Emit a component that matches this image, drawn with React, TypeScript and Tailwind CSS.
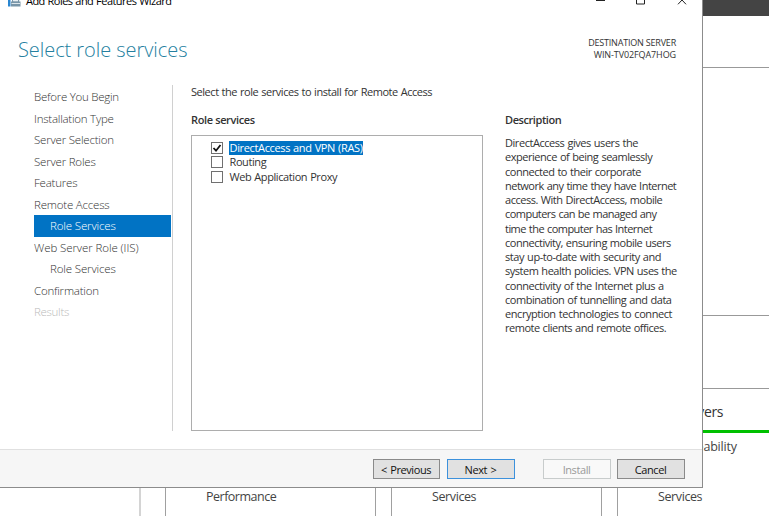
import React from "react";

const steps = [
  { label: "Before You Begin", tone: "text-[#333]", cls: "tracking-[-0.26px]" },
  { label: "Installation Type", tone: "text-[#333]", cls: "tracking-[-0.24px]" },
  { label: "Server Selection", tone: "text-[#333]", cls: "tracking-[-0.2px]" },
  { label: "Server Roles", tone: "text-[#333]", cls: "tracking-[-0.2px]" },
  { label: "Features", tone: "text-[#333]", cls: "tracking-[-0.2px]" },
  { label: "Remote Access", tone: "text-[#333]", cls: "tracking-[-0.2px]" },
  { label: "Role Services", tone: "bg-[#0173c4] text-white", cls: "pl-4 tracking-[-0.14px]" },
  { label: "Web Server Role (IIS)", tone: "text-[#333]", cls: "tracking-[-0.09px]" },
  { label: "Role Services", tone: "text-[#333]", cls: "pl-4 tracking-[-0.14px]" },
  { label: "Confirmation", tone: "text-[#333]", cls: "tracking-[-0.22px]" },
  { label: "Results", tone: "text-[#bbb]", cls: "tracking-[-0.3px]" },
];

const description = [
  { text: "DirectAccess gives users the", cls: "tracking-[-0.45px]" },
  { text: "experience of being seamlessly", cls: "tracking-[-0.46px]" },
  { text: "connected to their corporate", cls: "tracking-[-0.47px]" },
  { text: "network any time they have Internet", cls: "tracking-[-0.51px]" },
  { text: "access. With DirectAccess, mobile", cls: "tracking-[-0.48px]" },
  { text: "computers can be managed any", cls: "tracking-[-0.54px]" },
  { text: "time the computer has Internet", cls: "tracking-[-0.54px]" },
  { text: "connectivity, ensuring mobile users", cls: "tracking-[-0.48px]" },
  { text: "stay up-to-date with security and", cls: "tracking-[-0.43px]" },
  { text: "system health policies. VPN uses the", cls: "tracking-[-0.48px]" },
  { text: "connectivity of the Internet plus a", cls: "tracking-[-0.45px]" },
  { text: "combination of tunnelling and data", cls: "tracking-[-0.47px]" },
  { text: "encryption technologies to connect", cls: "tracking-[-0.43px]" },
  { text: "remote clients and remote offices.", cls: "tracking-[-0.49px]" },
];

const roles = [
  { label: "DirectAccess and VPN (RAS)", checked: true },
  { label: "Routing", checked: false },
  { label: "Web Application Proxy", checked: false },
];

function Tile({ label, cls }: { label: string; cls: string }) {
  return (
    <div className={`h-full w-[211px] shrink-0 border-x border-[#a0a0a0] pl-10 pt-px ${cls}`}>{label}</div>
  );
}

function ServerManager() {
  return (
    <div className="flex h-full w-full flex-col bg-white">
      <div className="h-4 shrink-0 bg-[#444]" />
      <div className="h-[52px] shrink-0 border-b border-[#999]" />
      <div className="h-[248px] shrink-0 border-b border-[#999]" />
      <div className="h-[73px] shrink-0 border-b border-[#999]" />
      <div className="flex h-[41px] shrink-0 items-center pl-[658px] pt-[3px] text-[14px] tracking-[-0.4px] text-[#333]">
        <span className="w-[65px] text-right whitespace-nowrap">All Servers</span>
      </div>
      <div className="ml-[617px] h-[3px] shrink-0 bg-[#00c000]" />
      <div className="flex h-[55px] shrink-0 pl-[658px] pt-[6px] text-[12.5px] leading-[16px] text-[#444]">
        <span className="w-[78px] text-right tracking-[-0.2px]">Manageability</span>
      </div>
      <div className="flex h-7 shrink-0 text-[12.5px] leading-[16px] text-[#444]">
        <div className="h-full w-[141px] shrink-0 border-r-2 border-[#d4d4d4]" />
        <Tile label="Performance" cls="ml-6 tracking-[-0.5px]" />
        <Tile label="Services" cls="ml-[15px] tracking-[-0.4px]" />
        <Tile label="Services" cls="ml-[15px] tracking-[-0.4px]" />
      </div>
    </div>
  );
}

function TitleBar() {
  return (
    <div className="flex h-[10px] shrink-0 items-start">
      <svg className="ml-2 shrink-0" width="13" height="8" viewBox="0 0 13 8">
        <path d="M0 0h2.500v6.500H0z" fill="#2a86d1" />
        <path d="M4 1.500V0h1.200v1.200H10V0h1.200v1.500H12.500v5H3V1.500z" fill="#7895a8" />
        <path d="M3.500 3.500h8.500M5 .5h5" stroke="#e8eef2" strokeWidth=".9" />
      </svg>
      <span className="-mt-[7px] ml-[5px] w-[500px] shrink-0 text-[11px] leading-[16px] tracking-[-0.54px] text-black [word-spacing:0.5px]">
        Add Roles and Features Wizard
      </span>
      <svg className="ml-[70px] shrink-0" width="96" height="10" viewBox="0 0 96 10" fill="none" stroke="#222">
        <path d="M0 .5h9" />
        <path d="M40.500 -4v8h8v-8" />
        <path d="M82 4.300l4-4.300 4 4.300" />
      </svg>
    </div>
  );
}

function Button({ label, tone, cls }: { label: string; tone: string; cls: string }) {
  return (
    <button
      className={`flex h-5 shrink-0 items-center justify-center border pr-px text-[11px] leading-none tracking-[-0.42px] whitespace-pre [word-spacing:1px] ${tone} ${cls}`}
    >
      {label}
    </button>
  );
}

function Wizard() {
  return (
    <section className="absolute left-0 top-0 flex h-[488px] w-[703px] flex-col border-b border-r border-[#8c8c8c] bg-white">
      <TitleBar />
      <header className="flex h-[75px] shrink-0 justify-between pl-[18px] pr-[26px]">
        <h1 className="mt-[26px] text-[20px] leading-[28px] font-light tracking-[-0.06px] text-[#257f9f]">Select role services</h1>
        <div className="mt-[27px] text-right text-[9px] leading-[12px] text-[#333]">
          <div className="tracking-[-0.2px]">DESTINATION SERVER</div>
          <div className="tracking-[-0.1px]">WIN-TV02FQA7HOG</div>
        </div>
      </header>
      <div className="flex h-[346px] shrink-0">
        <nav className="ml-[34px] w-[137px] pt-[1px]">
          {steps.map((s, i) => (
            <div key={i} className={`h-[21.5px] text-[11.5px] leading-[22px] whitespace-nowrap font-light ${s.tone} ${s.cls}`}>
              {s.label}
            </div>
          ))}
        </nav>
        <div className="ml-[1px] w-px bg-[#d0d0d0]" />
        <div className="ml-[18px] w-[292px] text-[11px] tracking-[-0.37px] text-[#333]">
          <p className="-mt-px h-[28px] leading-[15px] tracking-[-0.46px] whitespace-nowrap [word-spacing:0.6px]">
            Select the role services to install for Remote Access
          </p>
          <h2 className="h-[23px] leading-[15px] font-semibold">Role services</h2>
          <div className="h-[296px] border border-[#adadad] pl-[19px] pt-[5px]">
            {roles.map((r) => (
              <div key={r.label} className="flex h-[14.25px] items-center">
                <svg className="mr-[6px] shrink-0" width="12" height="12" viewBox="0 0 12 12" fill="none">
                  <rect x=".5" y=".5" width="11" height="11" stroke="#707070" fill="white" />
                  {r.checked && <path d="M2.500 6l2.500 2.700L9.500 3" stroke="#111" strokeWidth="1.8" />}
                </svg>
                <span
                  className={`leading-[14px] whitespace-nowrap [word-spacing:0.5px] ${r.checked ? "bg-[#0173c4] pl-[0.5px] tracking-[-0.35px] text-white" : "pl-[0.5px] tracking-[-0.41px]"}`}
                >
                  {r.label}
                </span>
              </div>
            ))}
          </div>
        </div>
        <div className="ml-[22px] w-[190px] text-[11px] text-[#333]">
          <h2 className="mt-[27px] h-[24px] leading-[15px] font-semibold tracking-[-0.42px]">Description</h2>
          {description.map((d) => (
            <div key={d.text} className={`h-[14.25px] leading-[14.25px] whitespace-nowrap [word-spacing:0.6px] ${d.cls}`}>
              {d.text}
            </div>
          ))}
        </div>
      </div>
      <footer className="mt-[18px] flex flex-1 border-t border-[#e0e0e0] bg-[#f6f6f6] pl-[373px] pt-[9px]">
        <Button label="< Previous" tone="border-[#8a8a8a] bg-[#e1e1e1] text-[#111]" cls="w-[67px]" />
        <Button label="Next >" tone="border-[#3c91dc] bg-[#e1e1e1] text-[#111]" cls="ml-[7px] w-[68px]" />
        <Button label="Install" tone="border-[#c8cccc] bg-[#f9f9f9] text-[#999]" cls="ml-7 w-[68px]" />
        <Button label="Cancel" tone="border-[#8a8a8a] bg-[#e1e1e1] text-[#111]" cls="ml-[6px] w-[68px]" />
      </footer>
    </section>
  );
}

export default function App() {
  return (
    <main className="relative h-[516px] w-[769px] overflow-hidden bg-white font-['Open_Sans','Noto_Sans',sans-serif]">
      <ServerManager />
      <Wizard />
    </main>
  );
}
